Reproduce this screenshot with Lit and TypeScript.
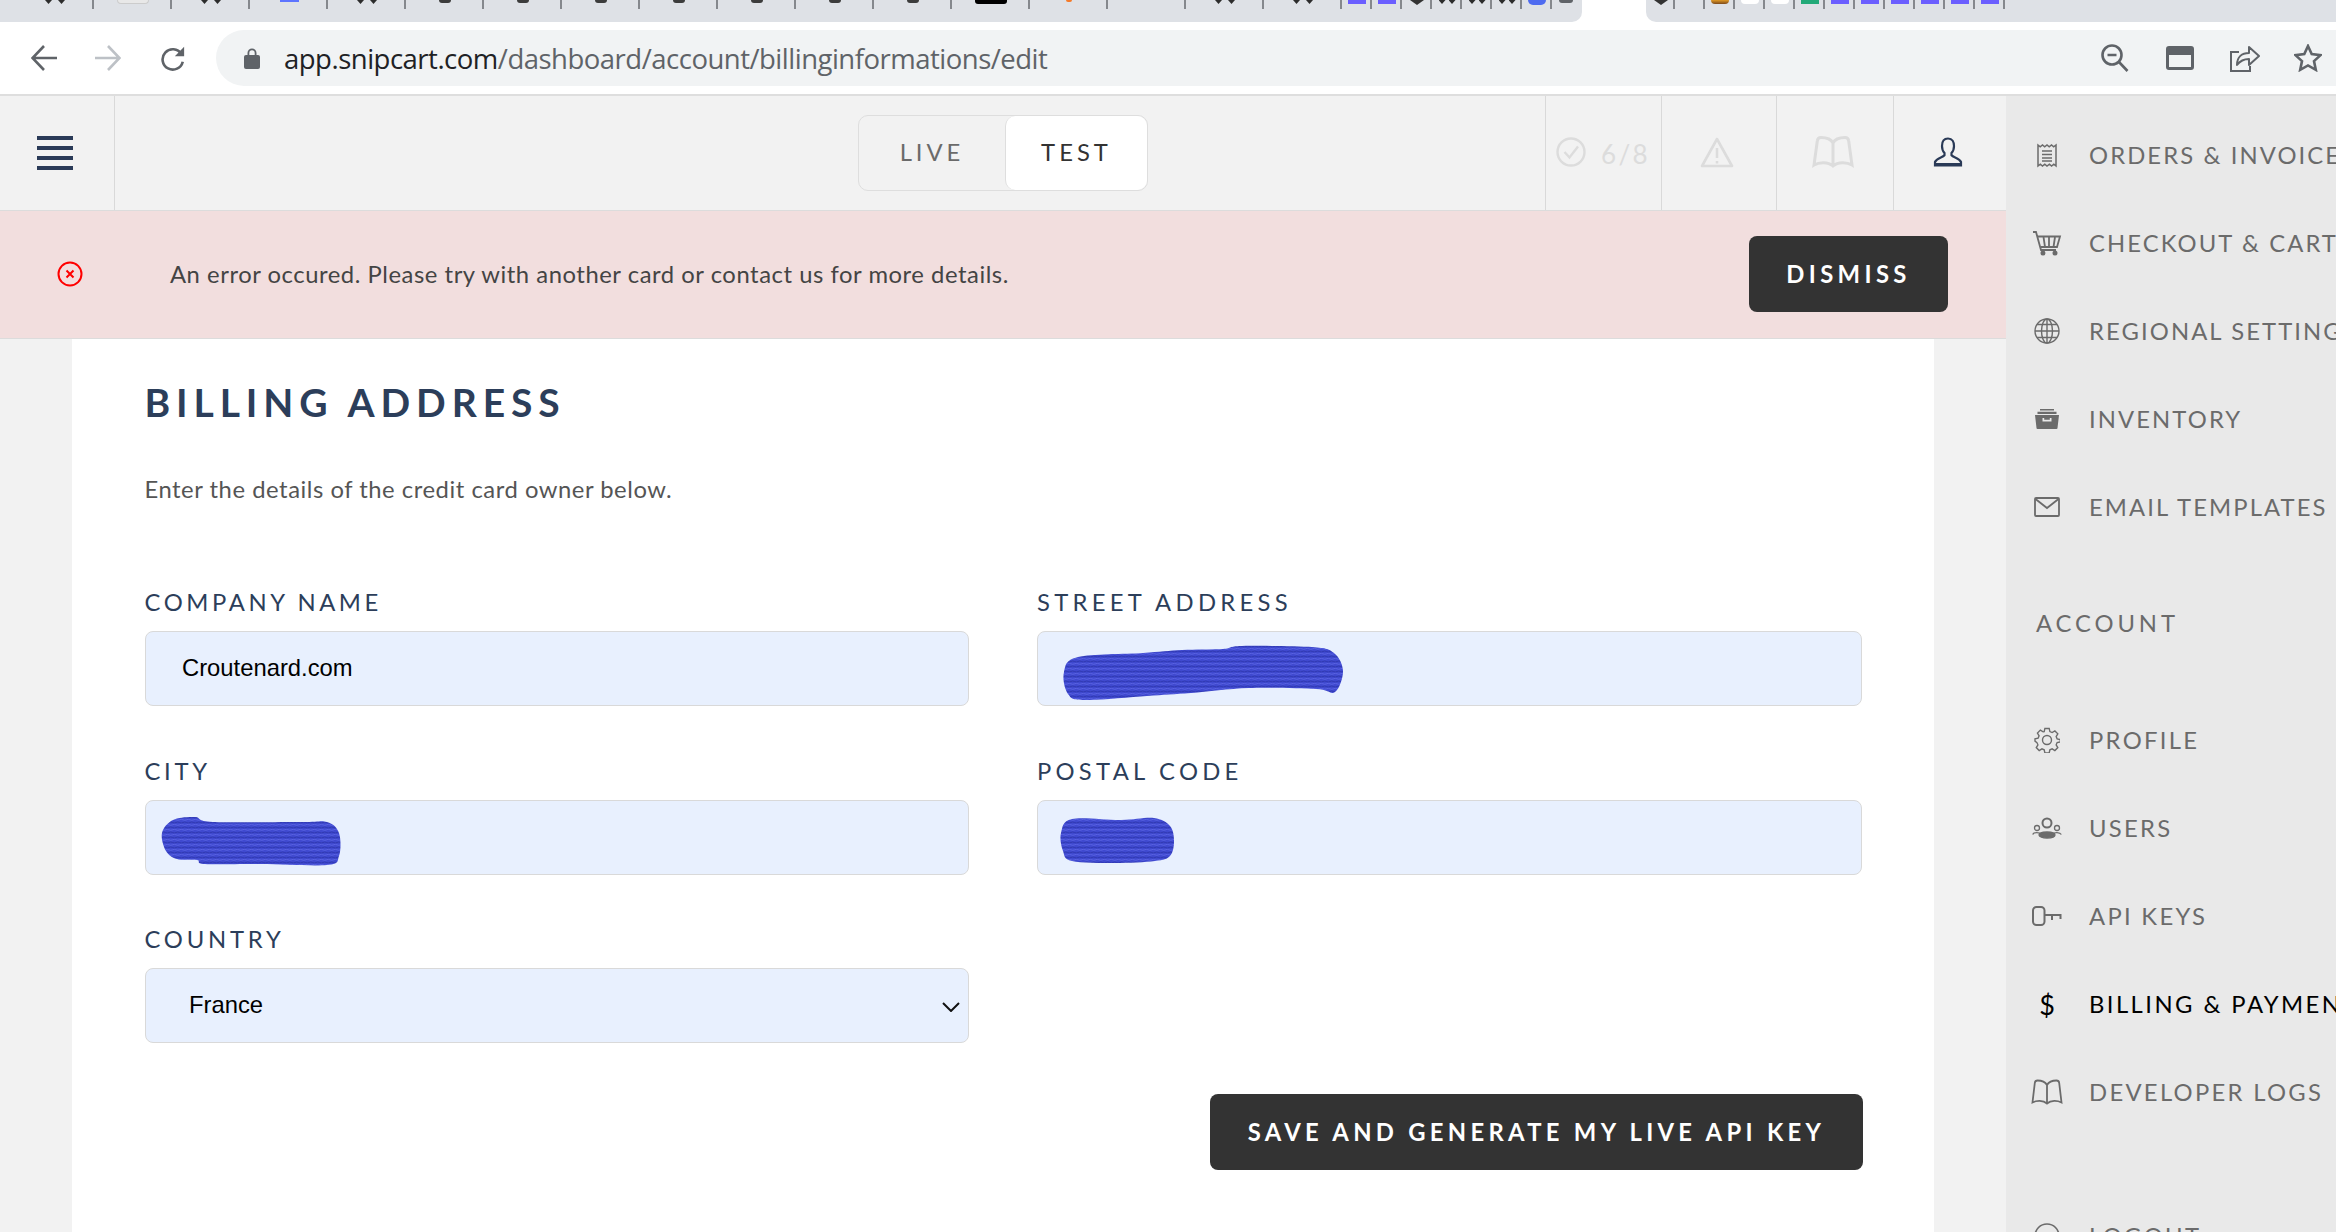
import { LitElement, html, css } from "lit";
import { customElement } from "lit/decorators.js";

const wide = 78;
const narrow = 30;
const tabsA: [string, number][] = [
  ["br", wide], ["box", wide], ["br", wide], ["blue", wide], ["br", wide],
  ["dot", wide], ["dot", wide], ["dot", wide], ["dot", wide], ["dot", wide], ["dot", wide], ["dot", wide],
  ["black", wide], ["orange", wide], ["", wide], ["br", wide], ["br", wide],
  ["purple", narrow], ["purple", narrow], ["dia", narrow], ["brs", narrow], ["brs", narrow], ["brs", narrow],
  ["bluec", narrow],
];
const tabsB: [string, number][] = [
  ["dia", 29], ["", narrow], ["brown", narrow], ["white", narrow], ["white", narrow], ["green", narrow],
  ["purple", narrow], ["purple", narrow], ["purple", narrow], ["purple", narrow], ["purple", narrow], ["purple", narrow],
];

const navy = "#2a3a57";
const grey = "#6b6b6b";

const icons: Record<string, unknown> = {
  receipt: html`<svg width="22" height="25" viewBox="0 0 22 25" fill="none" stroke="${grey}" stroke-width="1.5"><path d="M2 2l2.2 1.8L6.5 2l2.2 1.8L11 2l2.2 1.8L15.5 2l2.2 1.8L20 2v21l-2.2-1.8-2.2 1.8-2.2-1.8L11 23l-2.2-1.8L6.5 23l-2.2-1.8L2 23z"/><path d="M6 8h10M6 11.5h10M6 15h10M6 18h10" stroke-width="1.7"/></svg>`,
  cart: html`<svg width="30" height="25" viewBox="0 0 30 25" fill="none" stroke="${grey}" stroke-width="1.8"><path d="M1 1h3l5 18h15"/><path d="M5 5.500h23l-3 10.500H9"/><path d="M11.500 6l1.500 10M17 6v10M23 6l-1.500 10"/><circle cx="11" cy="22" r="1.600" fill="${grey}"/><circle cx="23" cy="22" r="1.600" fill="${grey}"/></svg>`,
  globe: html`<svg width="26" height="26" viewBox="0 0 26 26" fill="none" stroke="${grey}" stroke-width="1.4"><circle cx="13" cy="13" r="12"/><ellipse cx="13" cy="13" rx="5.500" ry="12"/><path d="M13 1v24M1 13h24M3 6.500h20M3 19.500h20"/></svg>`,
  inventory: html`<svg width="24" height="20" viewBox="0 0 24 20" fill="${grey}"><path d="M5 0h14v1.500H5zM2.500 2.800h19V5h-19z"/><path fill-rule="evenodd" d="M0 6h24l-1.500 13a1 1 0 0 1-1 1h-19a1 1 0 0 1-1-1zM7.500 9v3.500h9V9h-1.700v1.800H9.200V9z"/></svg>`,
  mail: html`<svg width="26" height="20" viewBox="0 0 26 20" fill="none" stroke="${grey}" stroke-width="1.800"><rect x="1" y="1" width="24" height="18" rx="1"/><path d="M1.500 2L13 11 24.500 2"/></svg>`,
  gear: html`<svg width="26" height="26" viewBox="0 0 26 26" fill="none" stroke="${grey}" stroke-width="1.4"><circle cx="13" cy="13" r="4.500"/><path d="M10.800 1.500h4.400l.7 3.200 2.300 1 2.800-1.700 3 3-1.700 2.800 1 2.300 3.200.7v2.400l-3.200.7-1 2.300 1.700 2.800-3 3-2.800-1.700-2.300 1-.7 3.200h-4.400l-.7-3.200-2.300-1-2.800 1.700-3-3 1.700-2.800-1-2.300L.7 14.400v-2.400l3.200-.7 1-2.300L3.200 6.200l3-3L9 4.900l1.100-.2z" transform="translate(.3 0) scale(.98)"/></svg>`,
  users: html`<svg width="30" height="22" viewBox="0 0 30 22" fill="none" stroke="${grey}" stroke-width="1.300"><circle cx="15" cy="6" r="4.500" stroke-width="2"/><circle cx="5" cy="11" r="2.500"/><circle cx="25" cy="11" r="2.500"/><ellipse cx="15" cy="18" rx="8" ry="3" fill="${grey}"/><path d="M.7 17.500c1-2.500 7-2.500 8 0M21 17c1-2 7-2 8.300.5"/></svg>`,
  key: html`<svg width="30" height="20" viewBox="0 0 30 20" fill="none" stroke="${grey}" stroke-width="2"><rect x="1" y="1" width="11.500" height="18" rx="3.500"/><path d="M12.500 9h17M20 9v5M28.500 9v4"/></svg>`,
  book: html`<svg width="32" height="26" viewBox="0 0 32 26" fill="none" stroke="${grey}" stroke-width="1.800"><path d="M16 6C14 2.500 10 1.500 6.500 1.500 5 1.500 4 2.500 3.800 4L1.500 23.500c4-2 10.500-2.500 14.500 1 4-3.500 10.500-3 14.500-1L28.200 4c-.2-1.500-1.200-2.500-2.700-2.500C22 1.500 18 2.500 16 6zM16 6v18"/></svg>`,
  logout: html`<svg width="26" height="26" viewBox="0 0 26 26" fill="none" stroke="${grey}" stroke-width="1.700"><circle cx="13" cy="13" r="12"/></svg>`,
};

type Pt = [number, number];

/* Closed Catmull-Rom spline through the outline points of a marker scribble. */
function smooth(points: Pt[]) {
  const n = points.length;
  let d = `M${points[0][0]} ${points[0][1]}`;
  for (let i = 0; i < n; i++) {
    const p0 = points[(i - 1 + n) % n];
    const p1 = points[i];
    const p2 = points[(i + 1) % n];
    const p3 = points[(i + 2) % n];
    const c1x = p1[0] + (p2[0] - p0[0]) / 6;
    const c1y = p1[1] + (p2[1] - p0[1]) / 6;
    const c2x = p2[0] - (p3[0] - p1[0]) / 6;
    const c2y = p2[1] - (p3[1] - p1[1]) / 6;
    d += `C${c1x.toFixed(1)} ${c1y.toFixed(1)} ${c2x.toFixed(1)} ${c2y.toFixed(1)} ${p2[0]} ${p2[1]}`;
  }
  return d + "Z";
}

const scribbles = [
  { cls: "city", left: 16, top: 16, w: 180, h: 50, x: 160, y: 815,
    pts: [[172, 819], [194, 816], [212, 821], [300, 821], [326, 821], [338, 832], [338, 855], [326, 864], [260, 863], [204, 863], [196, 859], [176, 858], [165, 850], [161, 832]] as Pt[] },
  { cls: "street", left: 25, top: 13, w: 282, h: 56, x: 1062, y: 644,
    pts: [[1078, 657], [1143, 653], [1182, 650], [1223, 649], [1242, 646], [1312, 647], [1334, 653], [1343, 671], [1335, 692], [1316, 689], [1249, 688], [1191, 693], [1147, 696], [1085, 700], [1068, 694], [1064, 672]] as Pt[] },
  { cls: "postal", left: 23, top: 16, w: 114, h: 47, x: 1060, y: 815,
    pts: [[1072, 818], [1121, 819], [1154, 817], [1170, 825], [1174, 840], [1170, 855], [1155, 860], [1115, 862], [1072, 860], [1063, 850], [1061, 832]] as Pt[] },
];

@customElement("app-root")
export class AppRoot extends LitElement {
  static styles = css`
    :host { display: block; width: 2336px; height: 1232px; overflow: hidden; background: #fff; font-family: Lato, "Liberation Sans", sans-serif; }
    * { box-sizing: border-box; }
    svg { display: block; flex: none; }

    .strip { height: 22px; display: flex; background: #fff; }
    .group { display: flex; background: #dee1e6; height: 22px; }
    .group-a { width: 1582px; padding-left: 16px; border-bottom-right-radius: 10px; }
    .group-b { margin-left: 64px; flex: 1; border-bottom-left-radius: 10px; }
    .cell { position: relative; height: 22px; display: flex; justify-content: center; }
    .cell::after { content: ""; position: absolute; right: 0; top: 0; width: 2px; height: 9px; background: #85888d; }
    .fav { display: block; }
    .fav.box { width: 32px; height: 4px; background: #e8e8e8; border: 1px solid #ccc; border-top: 0; border-radius: 0 0 4px 4px; }
    .fav.blue { width: 19px; height: 2px; background: #5d74ff; }
    .fav.dot { width: 12px; height: 2.500px; background: #3c3c3c; border-radius: 0 0 6px 6px; }
    .fav.black { width: 32px; height: 4px; background: #000; border-radius: 0 0 3px 3px; }
    .fav.orange { width: 6px; height: 2px; background: #f57a2a; border-radius: 0 0 3px 3px; }
    .fav.purple { width: 18px; height: 4px; background: #6b5eff; }
    .fav.green { width: 18px; height: 4px; background: #22a978; }
    .fav.brown { width: 18px; height: 4px; background: linear-gradient(#e19a25, #7d4a1c); border-radius: 0 0 5px 5px; }
    .fav.white { width: 18px; height: 4px; background: #fff; border-radius: 0 0 9px 9px; }
    .fav.bluec { width: 18px; height: 5px; background: #4e6bf0; border-radius: 0 0 9px 9px; }
    .fav.dia { width: 0; height: 0; border: 7px solid transparent; border-top: 5px solid #333; border-bottom: 0; }
    .fav.br, .fav.brs { display: flex; justify-content: center; gap: 6px; }
    .fav.br i, .fav.brs i { display: block; width: 7px; height: 4px; background: #2c2c2c; clip-path: polygon(0 0, 100% 0, 50% 100%); }
    .fav.brs { gap: 3px; }
    .tail { width: 28px; display: flex; justify-content: center; }
    .tail span { display: block; width: 14px; height: 3px; background: #5f6368; border-radius: 0 0 7px 7px; }

    .toolbar { height: 74px; background: #fff; border-bottom: 2px solid #dedede; display: flex; align-items: flex-start; padding-top: 8px; }
    .nav { display: flex; align-items: center; height: 56px; width: 216px; padding-left: 31px; gap: 38px; }
    .reload { margin-left: 1px; }
    .pill { width: 2120px; height: 56px; background: #f1f3f4; border-radius: 28px 0 0 28px; display: flex; align-items: center; padding-left: 28px; }
    .lock { margin-right: 24px; }
    .url { font-family: "Open Sans", sans-serif; font-size: 27.500px; color: #202124; letter-spacing: -.5px; white-space: nowrap; }
    .url span { color: #5f6368; }
    .tools { margin-left: auto; display: flex; align-items: center; gap: 36px; padding-right: 14px; }
    .t-zoom { margin-right: 1px; }
    .t-share { margin-right: -2px; }

    .body { display: flex; height: 1136px; }
    .main { width: 2006px; background: #f2f2f2; display: flex; flex-direction: column; }
    .side { width: 330px; background: #e9e9e9; padding-top: 15px; overflow: hidden; white-space: nowrap; }

    .head { height: 114px; display: grid; grid-template-columns: 1fr auto 1fr; }
    .burger { width: 115px; border-right: 1px solid #d9d9d9; display: flex; flex-direction: column; gap: 6.500px; padding: 40px 0 0 37px; }
    .burger i { display: block; width: 36px; height: 3.500px; background: #2a3a57; }
    .toggle { margin-top: 19px; height: 76px; width: 290px; display: flex; border: 1.500px solid #dedede; border-radius: 10px; }
    .toggle div { display: flex; align-items: center; justify-content: center; font-size: 23.800px; letter-spacing: 4px; padding-bottom: 2px; }
    .live { width: 146px; color: #6a6a6a; }
    .test { flex: 1; background: #fff; color: #333; border-left: 1.500px solid #dedede; border-radius: 10px; }
    .cells { display: flex; justify-content: flex-end; }
    .hc { height: 114px; border-left: 1px solid #d9d9d9; display: flex; align-items: center; justify-content: center; padding: 0 5px 2px 0; }
    .hc.c1 { width: 116px; gap: 15px; padding: 0 1px 2px 0; }
    .hc.c2 { width: 115px; }
    .hc.c3 { width: 117px; }
    .hc.c4 { width: 113px; }
    .count { font-size: 26px; letter-spacing: 2.400px; color: #dcdcdc; margin-top: 3px; }

    .banner { height: 129px; background: #f2dede; border-top: 1.500px solid #dcdcdc; border-bottom: 1.500px solid #dcdcdc; display: flex; align-items: center; padding: 0 58px 2px 57px; }
    .banner p { margin: 0 0 0 87px; font-size: 23.800px; letter-spacing: .55px; color: #444; flex: 1; }
    .dismiss { width: 199px; height: 76px; background: #333; color: #fff; border: 0; border-radius: 8px; font: 700 23.800px Lato, sans-serif; letter-spacing: 4.400px; padding: 0; }

    .card { margin: 0 72px; flex: 1; background: #fff; padding: 41px 71px 0 72.500px; }
    h1 { margin: 0; font-size: 39px; line-height: 44px; font-weight: 700; color: #2c3e5a; letter-spacing: 5.900px; }
    .desc { margin: 50px 0 0; font-size: 23.800px; line-height: 30px; color: #555; letter-spacing: .54px; }
    .form { margin-top: 86px; display: grid; grid-template-columns: 824px 825px; column-gap: 68.500px; row-gap: 52.500px; }
    label { display: block; font-size: 23.800px; line-height: 24px; color: #2c3e5a; margin-bottom: 17px; }
    .wrap { position: relative; height: 75px; }
    input, select { display: block; width: 100%; height: 75px; background: #e8f0fe; border: 1.500px solid #d9d9d9; border-radius: 8px; font: 23.800px "Liberation Sans", sans-serif; color: #000; outline: none; appearance: none; padding: 0 0 2px 36.500px; }
    select { padding-left: 43.500px; }
    .chev { position: absolute; right: 9px; top: 34px; pointer-events: none; }
    .scr { position: absolute; pointer-events: none; }
    .actions { display: flex; justify-content: flex-end; margin-top: 51px; }
    .save { width: 653px; height: 76px; background: #333; color: #fff; border: 0; border-radius: 8px; font: 700 23.800px Lato, sans-serif; letter-spacing: 4.300px; padding: 0; white-space: nowrap; }

    .row { height: 88px; display: flex; align-items: center; padding-left: 25px; font-size: 23.800px; letter-spacing: 2.100px; color: #6b6b6b; }
    .row.low { letter-spacing: 2.300px; }
    .row.on { color: #000; letter-spacing: 2.450px; }
    .ic { width: 32px; margin-right: 26px; display: flex; justify-content: center; align-items: center; flex: none; }
    .dollar { font-size: 27px; color: #000; letter-spacing: 0; }
    .acct { height: 145px; display: flex; align-items: center; padding: 0 0 2px 30px; font-size: 23.800px; letter-spacing: 3.900px; color: #6b6b6b; }
    .logout { margin-top: 56px; }
  `;

  private fav(kind: string) {
    if (kind === "br" || kind === "brs") return html`<span class="fav ${kind}"><i></i><i></i></span>`;
    return kind ? html`<span class="fav ${kind}"></span>` : "";
  }

  private tabs(list: [string, number][]) {
    return list.map(([k, w]) => html`<div class="cell" style="width:${w}px">${this.fav(k)}</div>`);
  }

  private row(icon: string, text: string, cls = "") {
    return html`<div class="row ${cls}"><span class="ic">${icon === "$" ? html`<span class="dollar">$</span>` : icons[icon]}</span>${text}</div>`;
  }

  private field(labelText: string, spacing: number, value: string, scribble?: (typeof scribbles)[number]) {
    return html`<div>
      <label style="letter-spacing:${spacing}px">${labelText}</label>
      <div class="wrap">
        <input type="text" readonly .value=${value} />
        ${scribble
          ? html`<svg class="scr" style="left:${scribble.left}px;top:${scribble.top}px" width=${scribble.w} height=${scribble.h} viewBox="${scribble.x} ${scribble.y} ${scribble.w} ${scribble.h}">
              <defs>
                <pattern id="ink-${scribble.cls}" patternUnits="userSpaceOnUse" width="7" height="5">
                  <rect width="7" height="5" fill="#3f49cf" />
                  <path d="M0 1.500q1.750-1 3.500 0t3.500 0" stroke="#2c35ad" stroke-width=".9" fill="none" />
                  <path d="M0 3.800q1.750 1 3.500 0t3.500 0" stroke="#5a64e4" stroke-width=".9" fill="none" />
                </pattern>
              </defs>
              <path d=${smooth(scribble.pts)} fill="url(#ink-${scribble.cls})" />
            </svg>`
          : ""}
      </div>
    </div>`;
  }

  render() {
    const g = "#5f6368";
    const pale = "#dcdcdc";
    return html`
      <div class="strip">
        <div class="group group-a">${this.tabs(tabsA)}<div class="tail"><span></span></div></div>
        <div class="group group-b">${this.tabs(tabsB)}</div>
      </div>
      <div class="toolbar">
        <div class="nav">
          <svg width="26" height="26" viewBox="0 0 26 26" fill="none" stroke="${g}" stroke-width="2.600"><path d="M26 13H2M13 1L1.500 13 13 25"/></svg>
          <svg width="26" height="26" viewBox="0 0 26 26" fill="none" stroke="#bdc1c6" stroke-width="2.600"><path d="M0 13h24M13 1l11.500 12L13 25"/></svg>
          <svg class="reload" width="26" height="26" viewBox="0 0 28 28" fill="none" stroke="${g}" stroke-width="2.800"><path d="M23 9.500A11 11 0 1 0 24.500 18"/><path d="M26 2v10H16z" fill="${g}" stroke="none"/></svg>
        </div>
        <div class="pill">
          <svg class="lock" width="16" height="22" viewBox="0 0 16 22" fill="${g}"><path d="M3.500 9V6a4.500 4.500 0 0 1 9 0v3h-1.800V6a2.700 2.700 0 0 0-5.400 0v3z"/><rect y="8" width="16" height="14" rx="2"/></svg>
          <div class="url">app.snipcart.com<span>/dashboard/account/billinginformations/edit</span></div>
          <div class="tools">
            <svg class="t-zoom" width="28" height="28" viewBox="0 0 28 28" fill="none" stroke="${g}" stroke-width="2.600"><circle cx="11" cy="11" r="9.500"/><path d="M6.500 11h9M18 18l8.500 9"/></svg>
            <svg width="28" height="24" viewBox="0 0 28 24" fill="${g}"><path fill-rule="evenodd" d="M3 0h22a3 3 0 0 1 3 3v18a3 3 0 0 1-3 3H3a3 3 0 0 1-3-3V3a3 3 0 0 1 3-3zM3 9v12h22V9z"/></svg>
            <svg class="t-share" width="30" height="28" viewBox="0 0 30 28" fill="none" stroke="${g}" stroke-width="2"><path d="M9 8H1v19h19v-5"/><path d="M7 21c0-8 5-12 12-12V3l10 9-10 9v-6c-5 0-9 2-12 6z" stroke-linejoin="round"/></svg>
            <svg width="28" height="28" viewBox="0 0 28 28" fill="none" stroke="${g}" stroke-width="2.600"><path d="M14 2l3.700 8.100 8.800 1-6.500 6 1.800 8.700L14 21.400l-7.800 4.400L8 17.100l-6.500-6 8.800-1z" stroke-linejoin="miter"/></svg>
          </div>
        </div>
      </div>
      <div class="body">
        <div class="main">
          <div class="head">
            <div class="burger"><i></i><i></i><i></i><i></i></div>
            <div class="toggle"><div class="live">LIVE</div><div class="test">TEST</div></div>
            <div class="cells">
              <div class="hc c1">
                <svg width="30" height="30" viewBox="0 0 30 30" fill="none" stroke="${pale}" stroke-width="2.400"><circle cx="15" cy="15" r="13.500"/><path d="M8.500 15l5 5.500 8.500-11"/></svg>
                <span class="count">6/8</span>
              </div>
              <div class="hc c2">
                <svg width="34" height="31" viewBox="0 0 34 31" fill="none" stroke="${pale}" stroke-width="2.600" stroke-linejoin="round"><path d="M17 2L2 29h30z"/><path d="M17 11v10M17 24v2.500"/></svg>
              </div>
              <div class="hc c3">
                <svg width="42" height="32" viewBox="0 0 42 32" fill="none" stroke="${pale}" stroke-width="3"><path d="M21 7C19 3 14 1.500 9 1.500 7 1.500 5.500 3 5.300 5L2 29c5-3 14-3.500 19 1 5-4.500 14-4 19-1L36.700 5c-.2-2-1.700-3.500-3.700-3.500C28 1.500 23 3 21 7zM21 7v22"/></svg>
              </div>
              <div class="hc c4">
                <svg width="30" height="30" viewBox="0 0 30 30" fill="none" stroke="${navy}" stroke-width="2.200"><path d="M15 1.500c-4.500 0-6 3.500-6 7.500 0 3 1.500 6 2.500 7v2.200C9.500 20.500 3.500 21 2 25v3.500h26V25c-1.500-4-7.500-4.500-9.500-6.800V16c1-1 2.500-4 2.500-7 0-4-1.500-7.500-6-7.500z"/><path d="M2 27.500h26" stroke-width="3"/></svg>
              </div>
            </div>
          </div>
          <div class="banner">
            <svg width="26" height="26" viewBox="0 0 26 26" fill="none" stroke="#f00" stroke-width="2"><circle cx="13" cy="13" r="11.500"/><path d="M9.500 9.500l7 7M16.500 9.500l-7 7"/></svg>
            <p>An error occured. Please try with another card or contact us for more details.</p>
            <button class="dismiss">DISMISS</button>
          </div>
          <div class="card">
            <h1>BILLING ADDRESS</h1>
            <p class="desc">Enter the details of the credit card owner below.</p>
            <div class="form">
              ${this.field("COMPANY NAME", 3.6, "Croutenard.com")}
              ${this.field("STREET ADDRESS", 4.3, "", scribbles[1])}
              ${this.field("CITY", 3.7, "", scribbles[0])}
              ${this.field("POSTAL CODE", 4.25, "", scribbles[2])}
              <div>
                <label style="letter-spacing:3.800px">COUNTRY</label>
                <div class="wrap">
                  <select><option>France</option></select>
                  <svg class="chev" width="18" height="10" viewBox="0 0 18 10" fill="none" stroke="#111" stroke-width="2"><path d="M1 1l8 8 8-8"/></svg>
                </div>
              </div>
            </div>
            <div class="actions"><button class="save">SAVE AND GENERATE MY LIVE API KEY</button></div>
          </div>
        </div>
        <nav class="side">
          ${this.row("receipt", "ORDERS & INVOICES")}
          ${this.row("cart", "CHECKOUT & CART")}
          ${this.row("globe", "REGIONAL SETTINGS")}
          ${this.row("inventory", "INVENTORY")}
          ${this.row("mail", "EMAIL TEMPLATES")}
          <div class="acct">ACCOUNT</div>
          ${this.row("gear", "PROFILE", "low")}
          ${this.row("users", "USERS", "low")}
          ${this.row("key", "API KEYS", "low")}
          ${this.row("$", "BILLING & PAYMENT", "on")}
          ${this.row("book", "DEVELOPER LOGS", "low")}
          ${this.row("logout", "LOGOUT", "logout low")}
        </nav>
      </div>
    `;
  }
}
